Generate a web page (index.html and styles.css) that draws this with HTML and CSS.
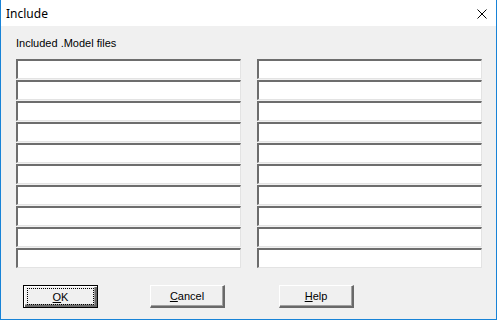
FILE: index.html
```html
<!DOCTYPE html>
<html lang="en">
<head>
    <meta charset="UTF-8">
    <title>Include</title>
    <link rel="stylesheet" href="styles.css">
</head>
<body>
    <div class="window">
        <div class="titlebar">
            <span class="title">Include</span>
            <svg class="close" width="10" height="10" viewBox="0 0 10 10">
                <path d="M0.5 0.5 L9.5 9.5 M9.5 0.5 L0.5 9.5" stroke="#000" stroke-width="1" fill="none"/>
            </svg>
        </div>
        <div class="client">
            <div class="caption">Included .Model files</div>
            <div class="fields">
                <input type="text"><input type="text">
                <input type="text"><input type="text">
                <input type="text"><input type="text">
                <input type="text"><input type="text">
                <input type="text"><input type="text">
                <input type="text"><input type="text">
                <input type="text"><input type="text">
                <input type="text"><input type="text">
                <input type="text"><input type="text">
                <input type="text"><input type="text">
            </div>
            <div class="buttons">
                <button class="btn default"><span class="focus"><u>O</u>K</span></button>
                <button class="btn"><span><u>C</u>ancel</span></button>
                <button class="btn"><span><u>H</u>elp</span></button>
            </div>
        </div>
    </div>
</body>
</html>
```

FILE: styles.css
```css
body {
    margin: 0;
    background: #fff;
    font-family: "Liberation Sans", Arial, sans-serif;
}
.window {
    width: 495px;
    height: 319px;
    border: 1px solid #1883d7;
    border-top: none;
    background: #f0f0f0;
    display: flex;
    flex-direction: column;
}
.titlebar {
    height: 26px;
    background: #fff;
    display: flex;
    align-items: center;
    justify-content: space-between;
    padding: 0 9px 0 5px;
}
.title {
    font-family: "Noto Sans", sans-serif;
    font-size: 12px;
    color: #000;
}
.close {
    margin-top: 1px;
}
.client {
    padding: 11px 15px 0 15px;
}
.caption {
    font-size: 11px;
    height: 22px;
    line-height: 13px;
    color: #000;
}
.fields {
    display: grid;
    grid-template-columns: 225px 225px;
    column-gap: 16px;
    row-gap: 1px;
}
.fields input {
    box-sizing: border-box;
    height: 20px;
    margin: 0;
    padding: 0;
    background: #fff;
    border-style: solid;
    border-width: 2px 1px 1px 2px;
    border-color: #6d6d6d #e3e3e3 #e3e3e3 #6d6d6d;
    outline: none;
}
.buttons {
    display: flex;
    padding: 17px 0 0 7px;
    gap: 52px;
}
.buttons .btn + .btn + .btn {
    margin-left: 2px;
}
.btn {
    box-sizing: border-box;
    width: 75px;
    height: 23px;
    margin: 0;
    padding: 2px;
    font-family: "Liberation Sans", Arial, sans-serif;
    font-size: 11px;
    color: #000;
    background: #f0f0f0;
    border-style: solid;
    border-width: 1px 2px 2px 1px;
    border-color: #fff #696969 #696969 #fff;
    box-shadow: inset -1px -1px 0 #a0a0a0;
    display: flex;
    align-items: center;
    justify-content: center;
}
.btn span {
    display: flex;
    align-items: center;
    justify-content: center;
    width: 100%;
    height: 100%;
    box-sizing: border-box;
}
.btn.default {
    border: 1px solid #000;
    box-shadow: inset 1px 1px 0 #fff, inset -2px -2px 0 #696969, inset -3px -3px 0 #a0a0a0;
}
.btn .focus {
    border: 1px dotted #000;
    margin: 1px;
}
```
